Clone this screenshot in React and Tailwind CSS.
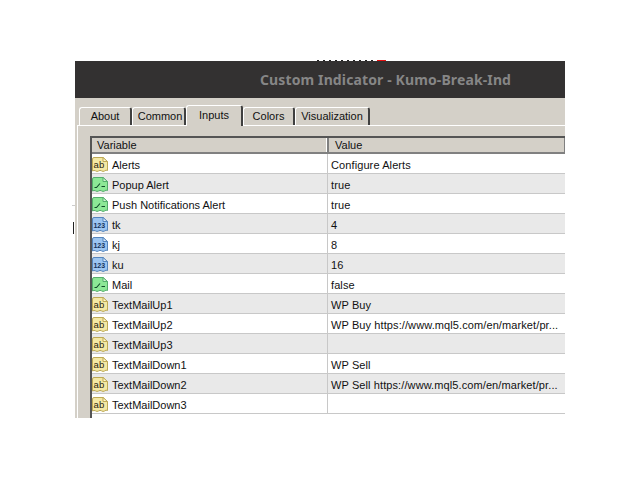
const rows = [
  { name: "Alerts", value: "Configure Alerts", type: "text" },
  { name: "Popup Alert", value: "true", type: "bool" },
  { name: "Push Notifications Alert", value: "true", type: "bool" },
  { name: "tk", value: "4", type: "num" },
  { name: "kj", value: "8", type: "num" },
  { name: "ku", value: "16", type: "num" },
  { name: "Mail", value: "false", type: "bool" },
  { name: "TextMailUp1", value: "WP Buy", type: "text" },
  { name: "TextMailUp2", value: "WP Buy https://www.mql5.com/en/market/pr...", type: "text" },
  { name: "TextMailUp3", value: "", type: "text" },
  { name: "TextMailDown1", value: "WP Sell", type: "text" },
  { name: "TextMailDown2", value: "WP Sell https://www.mql5.com/en/market/pr...", type: "text" },
  { name: "TextMailDown3", value: "", type: "text" },
];

const iconColors = {
  text: { fill: "#f4e8a4", stroke: "#bda955", fold: "#fff8cf" },
  bool: { fill: "#8ce896", stroke: "#55ad6c", fold: "#d2f7d4" },
  num: { fill: "#9cc5f0", stroke: "#5585bd", fold: "#d9e9fa" },
};

function TypeIcon({ type }) {
  const c = iconColors[type];
  return (
    <svg width="17" height="17" viewBox="0 0 17 17" className="shrink-0 -translate-y-px">
      <path
        d="M0.5 3 Q0.5 1.5 2 1.5 H11 L15.5 5.5 V14.5 Q14 13.5 12.5 15 Q11 16 9.5 14.8 Q8 13.8 6.5 15 Q5 16 3.5 14.8 Q2 14 0.5 15 Z"
        fill={c.fill}
        stroke={c.stroke}
      />
      <path d="M11 1.5 V5.5 H15.5 Z" fill={c.fold} stroke={c.stroke} />
      {type === "text" && (
        <text x="1.6" y="11.5" fontSize="9.5" fontFamily="Liberation Sans, sans-serif" fill="#2a2410">
          ab
        </text>
      )}
      {type === "num" && (
        <text x="1.4" y="11.5" fontSize="7" fontWeight="700" fontFamily="Liberation Sans, sans-serif" fill="#16325a">
          123
        </text>
      )}
      {type === "bool" && (
        <path d="M2.5 11.5 H4.5 L8 7.5 M9.5 10.5 H13" fill="none" stroke="#0f4a28" strokeWidth="1.1" />
      )}
    </svg>
  );
}

function Tab({ label, active, className }) {
  if (active) {
    return (
      <div className="h-[21px] w-[57px] -mb-px z-10 flex items-start justify-center pt-[1px] bg-[#d4d0c8] border-t border-l border-white border-r-2 border-r-[#404040] rounded-t-[3px]">
        {label}
      </div>
    );
  }
  return (
    <div className={`h-[18px] flex items-center justify-center bg-[#d4d0c8] border-t border-l border-white border-r-2 border-r-[#404040] rounded-t-[3px] ${className}`}>
      {label}
    </div>
  );
}

export default function App() {
  return (
    <div className="relative w-[640px] h-[480px] bg-white overflow-hidden pt-[61px] pl-[75px] font-['Tahoma','Liberation_Sans',sans-serif] text-[11px] text-[#111]">
      {/* stray bits of the desktop around the window */}
      <div className="absolute left-[317px] top-[60px] w-[62px] h-px bg-[repeating-linear-gradient(90deg,#222_0,#222_2px,#fff_2px,#fff_6px)]" />
      <div className="absolute left-[377px] top-[60px] w-[9px] h-px bg-[#e81010]" />
      <div className="absolute left-[72px] top-[205px] w-[3px] h-px bg-[#ccc]" />
      <div className="absolute left-[73px] top-[222px] w-px h-[12px] bg-[#222]" />

      <div className="w-[490px] h-[357px] bg-[#d4d0c8] overflow-hidden">
        <div className="h-[37px] bg-[#333131] flex items-center pl-[185px]">
          <span className="font-['Noto_Sans',sans-serif] font-bold text-[14px] tracking-[0.12px] text-[#868686]">
            Custom Indicator - Kumo-Break-Ind
          </span>
        </div>

        <div className="flex items-end h-[27px] pl-[4px] pt-[6px]">
          <Tab label="About" className="w-[53px]" />
          <Tab label="Common" className="w-[54px] pl-[3px]" />
          <Tab label="Inputs" active />
          <Tab label="Colors" className="w-[52px]" />
          <Tab label="Visualization" className="w-[75px]" />
        </div>

        <div className="ml-[2px] h-[293px] border-t border-l border-white pl-[12px] pt-[10px]">
          <div className="border-t-2 border-l-2 border-[#555] h-[283px] bg-white">
            <div className="flex h-[14px] bg-[#d4d0c8] border-b-2 border-[#808080] box-content">
              <div className="w-[237px] pl-[5px] flex items-center border-r-2 border-r-[#808080] shadow-[inset_-1px_0_0_#fff]">Variable</div>
              <div className="flex-1 pl-[6px] flex items-center border-r border-r-[#808080]">Value</div>
            </div>
            {rows.map((row, i) => (
              <div
                key={row.name}
                className={`flex h-[20px] border-b border-[#c8c8c8] ${i % 2 === 0 ? "bg-white" : "bg-[#e9e9e9]"}`}
              >
                <div className="w-[236px] flex items-center gap-[3px] pt-[4px] border-r border-[#c8c8c8]">
                  <TypeIcon type={row.type} />
                  <span>{row.name}</span>
                </div>
                <div className="flex-1 pl-[3px] pt-[4px] flex items-center whitespace-nowrap tracking-[0.1px]">{row.value}</div>
              </div>
            ))}
          </div>
        </div>
      </div>
    </div>
  );
}
